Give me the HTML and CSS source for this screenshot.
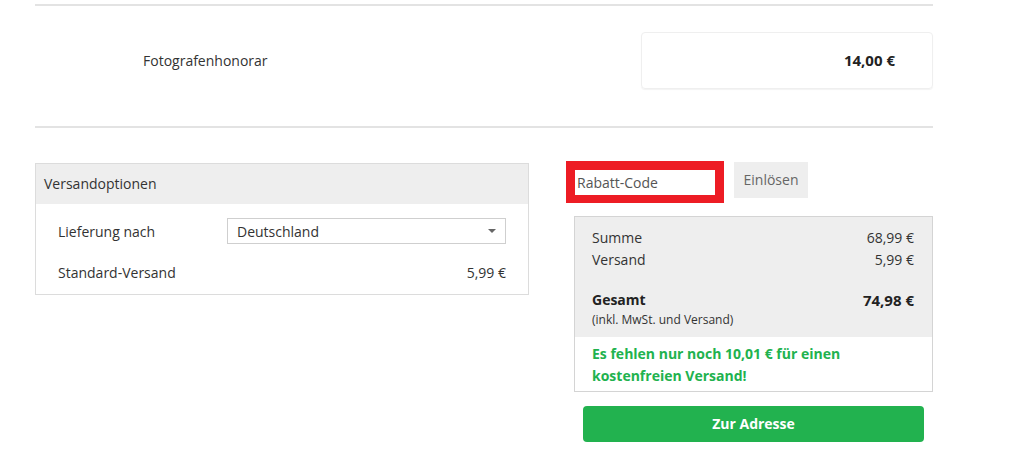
FILE: index.html
```html
<!DOCTYPE html>
<html lang="de">
<head>
<meta charset="utf-8">
<link rel="stylesheet" href="styles.css">
</head>
<body>
<div class="page">
  <div class="fee-row">
    <div class="fee-label">Fotografenhonorar</div>
    <div class="fee-box"><span class="fee-price">14,00 €</span></div>
  </div>
  <div class="bottom">
    <div class="ship">
      <div class="ship-head">Versandoptionen</div>
      <div class="ship-body">
        <div class="ship-line">
          <span class="ship-lbl">Lieferung nach</span>
          <div class="select"><span>Deutschland</span><span class="caret"></span></div>
        </div>
        <div class="ship-line std">
          <span class="ship-lbl">Standard-Versand</span>
          <span>5,99 €</span>
        </div>
      </div>
    </div>
    <div class="side">
      <div class="coupon">
        <div class="code-frame"><div class="code-input">Rabatt-Code</div></div>
        <div class="redeem">Einlösen</div>
      </div>
      <div class="summary">
        <div class="sum-gray">
          <div class="sum-row"><span>Summe</span><span>68,99 €</span></div>
          <div class="sum-row"><span>Versand</span><span>5,99 €</span></div>
          <div class="sum-row total"><span>Gesamt</span><span class="big">74,98 €</span></div>
          <div class="incl">(inkl. MwSt. und Versand)</div>
        </div>
        <div class="free">Es fehlen nur noch 10,01 € für einen<br>kostenfreien Versand!</div>
      </div>
      <div class="cta">Zur Adresse</div>
    </div>
  </div>
</div>
</body>
</html>
```

FILE: styles.css
```css
html, body {
  margin: 0;
  padding: 0;
  background: #fff;
}
body {
  font-family: "Open Sans", "Liberation Sans", sans-serif;
  font-size: 14px;
  color: #333;
}
.page {
  width: 898px;
  margin-left: 35px;
  padding-top: 4px;
}
.fee-row {
  border-top: 2px solid #e3e3e3;
  border-bottom: 2px solid #e3e3e3;
  height: 120px;
  display: flex;
  align-items: center;
  justify-content: space-between;
}
.fee-label {
  margin-left: 108px;
  margin-top: -11px;
}
.fee-box {
  width: 292px;
  height: 57px;
  border: 1px solid #efefef;
  border-radius: 4px;
  box-shadow: 0 1px 1px rgba(0,0,0,0.05);
  display: flex;
  align-items: center;
  justify-content: flex-end;
  margin-top: -12px;
  box-sizing: border-box;
  padding-right: 37px;
}
.fee-price {
  font-weight: 700;
  font-size: 15px;
  color: #222;
}
.bottom {
  display: flex;
  justify-content: space-between;
  margin-top: 33px;
}
.ship {
  width: 494px;
  height: 132px;
  box-sizing: border-box;
  border: 1px solid #dcdcdc;
  margin-top: 2px;
}
.ship-head {
  background: #eeeeee;
  height: 40px;
  line-height: 40px;
  padding-left: 8px;
  color: #333;
}
.ship-body {
  padding: 14px 22px 0 22px;
}
.ship-line {
  display: flex;
  justify-content: space-between;
  align-items: center;
}
.ship-lbl {
  width: 169px;
}
.select {
  flex: 1;
  height: 26px;
  box-sizing: border-box;
  border: 1px solid #cfcfcf;
  display: flex;
  align-items: center;
  justify-content: space-between;
  padding: 0 9px;
  color: #333;
}
.caret {
  width: 0;
  height: 0;
  border-left: 4px solid transparent;
  border-right: 4px solid transparent;
  border-top: 4px solid #666;
}
.std {
  margin-top: 19px;
  line-height: 19px;
}
.side {
  width: 367px;
  display: flex;
  flex-direction: column;
}
.coupon {
  display: flex;
  align-items: flex-start;
}
.code-frame {
  width: 158px;
  height: 42px;
  box-sizing: border-box;
  border: 9px solid #ed1c24;
  border-bottom-width: 8px;
}
.code-input {
  background: #fff;
  height: 25px;
  line-height: 25px;
  padding-left: 2px;
  color: #555;
}
.redeem {
  margin-left: 10px;
  margin-top: 1px;
  width: 74px;
  height: 36px;
  line-height: 36px;
  text-align: center;
  background: #eeeeee;
  color: #666;
}
.summary {
  margin-left: 8px;
  margin-top: 13px;
  border: 1px solid #d4d4d4;
  width: 359px;
  box-sizing: border-box;
}
.sum-gray {
  background: #eeeeee;
  padding: 10px 18px 9px 17px;
  height: 120px;
  box-sizing: border-box;
}
.sum-row {
  display: flex;
  justify-content: space-between;
  line-height: 22px;
}
.total {
  margin-top: 18px;
  font-weight: 700;
  color: #222;
}
.big {
  font-size: 15px;
}
.incl {
  font-size: 12px;
  line-height: 18px;
}
.free {
  color: #21b24e;
  font-weight: 700;
  padding: 6px 17px 6px 17px;
  line-height: 22px;
  height: 54px;
  box-sizing: border-box;
}
.cta {
  margin-left: 17px;
  margin-top: 14px;
  width: 341px;
  height: 36px;
  line-height: 36px;
  border-radius: 4px;
  background: #22b24f;
  color: #fff;
  font-weight: 700;
  text-align: center;
}
```
